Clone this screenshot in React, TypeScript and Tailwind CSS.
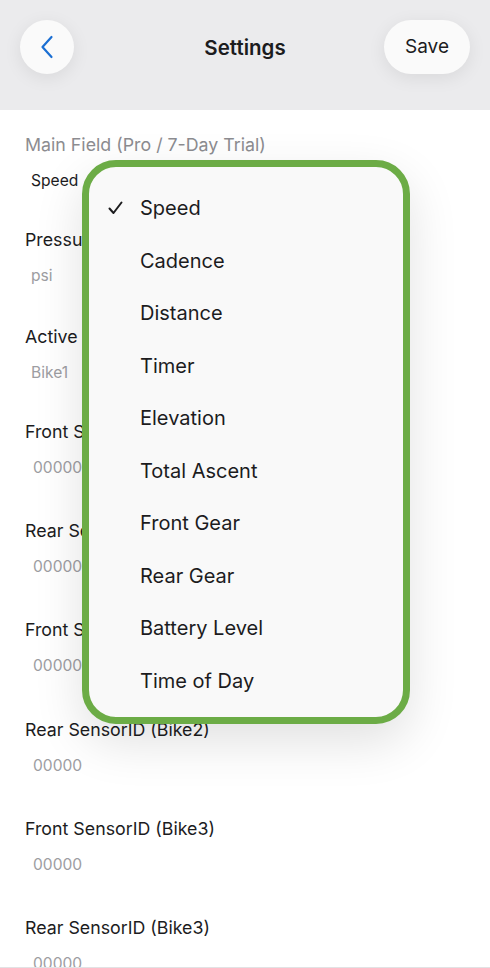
import { useState } from "react";

const fields = [
  { label: "Main Field (Pro / 7-Day Trial)", value: "Speed", muted: true, h: "h-[95px]", dark: true },
  { label: "Pressure Units", value: "psi", h: "h-[97px]" },
  { label: "Active Bike Profile", value: "Bike1", h: "h-[95px]" },
  { label: "Front SensorID (Bike1)", value: "00000", h: "h-[99px]", id: true },
  { label: "Rear SensorID (Bike1)", value: "00000", h: "h-[99px]", id: true },
  { label: "Front SensorID (Bike2)", value: "00000", h: "h-[100px]", id: true },
  { label: "Rear SensorID (Bike2)", value: "00000", h: "h-[99px]", id: true },
  { label: "Front SensorID (Bike3)", value: "00000", h: "h-[99px]", id: true },
  { label: "Rear SensorID (Bike3)", value: "00000", h: "h-[99px]", id: true },
];

const options = [
  "Speed",
  "Cadence",
  "Distance",
  "Timer",
  "Elevation",
  "Total Ascent",
  "Front Gear",
  "Rear Gear",
  "Battery Level",
  "Time of Day",
];

export default function App() {
  const [selected, setSelected] = useState("Speed");

  return (
    <div
      className="relative h-[968px] w-[490px] overflow-hidden bg-white text-[#1c1c1e]"
      style={{ fontFamily: "Inter, 'Noto Sans', sans-serif" }}
    >
      {/* header */}
      <div className="grid h-[110px] grid-cols-[1fr_auto_1fr] items-start bg-[#ebebed] px-[20px] pt-[20px]">
        <button className="flex h-[54px] w-[54px] items-center justify-center rounded-full bg-[#fafafa] shadow-[0_4px_18px_rgba(0,0,0,0.08)]">
          <svg width="14" height="24" viewBox="0 0 14 24" fill="none">
            <path d="M11.5 2 L2.5 12 L11.5 22" stroke="#1b6fd3" strokeWidth="2.2" strokeLinecap="round" strokeLinejoin="round" />
          </svg>
        </button>
        <div className="mt-[13px] text-[20.5px] font-semibold">Settings</div>
        <div className="flex justify-end">
          <button className="h-[54px] w-[86px] rounded-full bg-[#fafafa] text-[19px] shadow-[0_4px_18px_rgba(0,0,0,0.08)]">
            Save
          </button>
        </div>
      </div>

      {/* form */}
      <div className="pt-[23px]">
        {fields.map((f) => (
          <div key={f.label} className={`${f.h} px-[25px]`}>
            <div className={`text-[17.8px] leading-[24px] ${f.muted ? "text-[#8c8c90]" : "text-[#1c1c1e]"}`}>{f.label}</div>
            <div
              className={`mt-[14px] text-[15.6px] leading-[20px] ${f.id ? "pl-[8px]" : "pl-[6px]"} ${
                f.dark ? "text-[#1c1c1e]" : "text-[#9d9da2]"
              }`}
            >
              {f.value}
            </div>
          </div>
        ))}
      </div>

      <div className="absolute bottom-0 left-0 h-[1px] w-full bg-[#e2e2e4]" />

      {/* dropdown */}
      <div className="absolute left-[82px] top-[160px] h-[564px] w-[328px] rounded-[34px] border-[7px] border-[#6cac46] bg-[#f9f9f9] pb-[10px] pt-[15px] shadow-[0_18px_50px_rgba(0,0,0,0.12)]">
        {options.map((o) => (
          <div
            key={o}
            onClick={() => setSelected(o)}
            className="relative flex h-[52.5px] cursor-pointer items-center pl-[51px] text-[20px] text-[#1c1c1e]"
          >
            {selected === o && (
              <svg className="absolute left-[19px] top-[19px]" width="15" height="14" viewBox="0 0 15 14" fill="none">
                <path d="M1.5 7.5 L5.5 12 L13.5 1.5" stroke="#1c1c1e" strokeWidth="2" strokeLinecap="round" strokeLinejoin="round" />
              </svg>
            )}
            {o}
          </div>
        ))}
      </div>
    </div>
  );
}
